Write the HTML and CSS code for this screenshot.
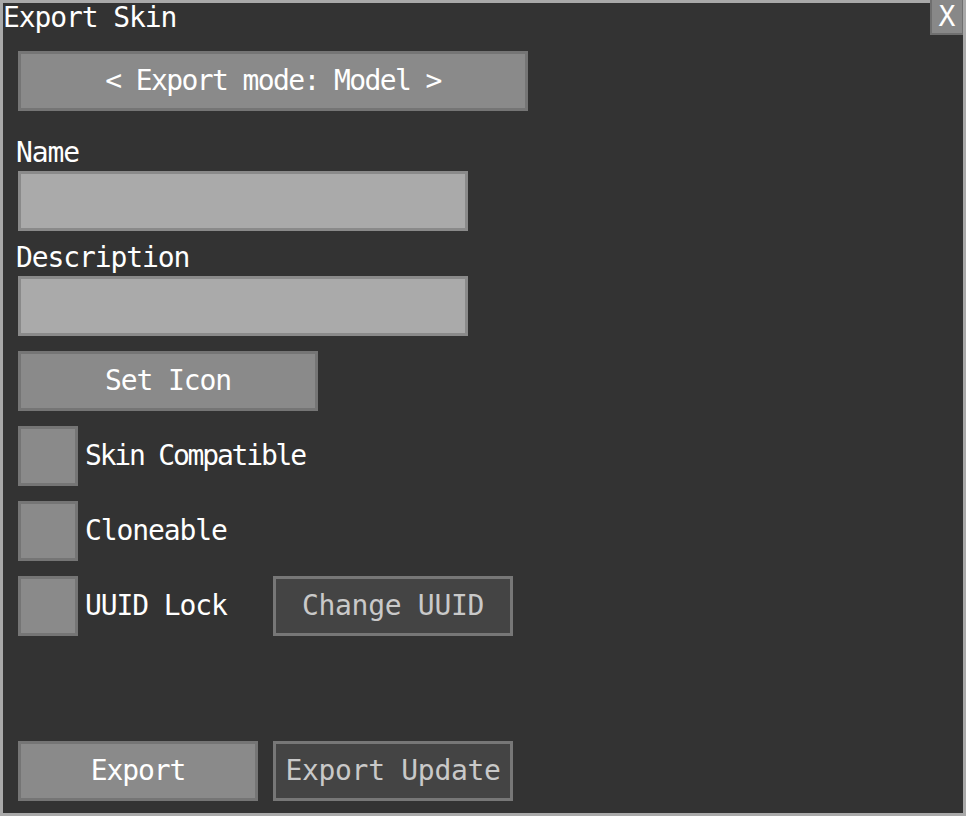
FILE: index.html
```html
<!DOCTYPE html>
<html lang="en">
<head>
<meta charset="utf-8">
<title>Export Skin</title>
<link rel="stylesheet" href="styles.css">
</head>
<body>
<div class="window">
  <div class="header">
    <span class="title">Export Skin</span>
    <div class="close">X</div>
  </div>
  <div class="content">
    <div class="btn mode-btn tight">&lt; Export mode: Model &gt;</div>
    <div class="fields">
      <div class="label">Name</div>
      <div class="field"></div>
      <div class="label">Description</div>
      <div class="field"></div>
    </div>
    <div class="btn icon-btn">Set Icon</div>
    <div class="check-row">
      <div class="checkbox"></div>
      <span class="check-label tighter">Skin Compatible</span>
    </div>
    <div class="check-row">
      <div class="checkbox"></div>
      <span class="check-label">Cloneable</span>
    </div>
    <div class="pair-row">
      <div class="check-row">
        <div class="checkbox"></div>
        <span class="check-label">UUID Lock</span>
      </div>
      <div class="btn disabled wide">Change UUID</div>
    </div>
    <div class="pair-row bottom-row">
      <div class="btn">Export</div>
      <div class="btn disabled wide">Export Update</div>
    </div>
  </div>
</div>
</body>
</html>
```

FILE: styles.css
```css
html, body {
  margin: 0;
  padding: 0;
  background: #333333;
}

body {
  font-family: "DejaVu Sans Mono", "Liberation Mono", monospace;
  font-size: 28px;
  letter-spacing: -1.1px;
  color: #ffffff;
}

.window {
  position: relative;
  width: 966px;
  height: 816px;
  box-sizing: border-box;
  border: 3px solid #a9a9a9;
  background: #333333;
  display: flex;
  flex-direction: column;
}

.header {
  height: 33px;
  flex: none;
}

.title {
  display: block;
  line-height: 29px;
  white-space: nowrap;
}

.close {
  position: absolute;
  top: -3px;
  right: 0;
  width: 33px;
  height: 35px;
  box-sizing: border-box;
  background: #888888;
  border: 2px solid #6f6f6f;
  border-right-width: 1px;
  border-top-width: 0;
  text-align: center;
  line-height: 33px;
  letter-spacing: 0;
}

.content {
  flex: 1;
  display: flex;
  flex-direction: column;
  gap: 15px;
  padding: 15px 15px 12px;
}

.btn {
  height: 60px;
  box-sizing: border-box;
  background: #8a8a8a;
  border: 3px solid #757575;
  text-align: center;
  line-height: 54px;
  white-space: nowrap;
  color: #ffffff;
}

.mode-btn {
  width: 510px;
}

.icon-btn {
  width: 300px;
}

.btn.disabled {
  background: #444444;
  border-color: #777777;
  color: #c9c9c9;
}

.tight {
  letter-spacing: -1.6px;
}

.tighter {
  letter-spacing: -2.2px;
}

.wide {
  letter-spacing: -0.3px;
}

.fields {
  display: flex;
  flex-direction: column;
}

.label {
  height: 45px;
  box-sizing: border-box;
  padding-top: 8px;
  line-height: 37px;
  margin-left: -2px;
}

.field {
  width: 450px;
  height: 60px;
  box-sizing: border-box;
  background: #aaaaaa;
  border: 3px solid #8a8a8a;
}

.check-row {
  display: flex;
  align-items: center;
  height: 60px;
}

.checkbox {
  width: 60px;
  height: 60px;
  box-sizing: border-box;
  background: #8a8a8a;
  border: 3px solid #757575;
  flex: none;
}

.check-label {
  margin-left: 7px;
  line-height: 54px;
  white-space: nowrap;
}

.pair-row {
  display: grid;
  grid-template-columns: 240px 240px;
  gap: 15px;
}

.bottom-row {
  margin-top: auto;
}
```
